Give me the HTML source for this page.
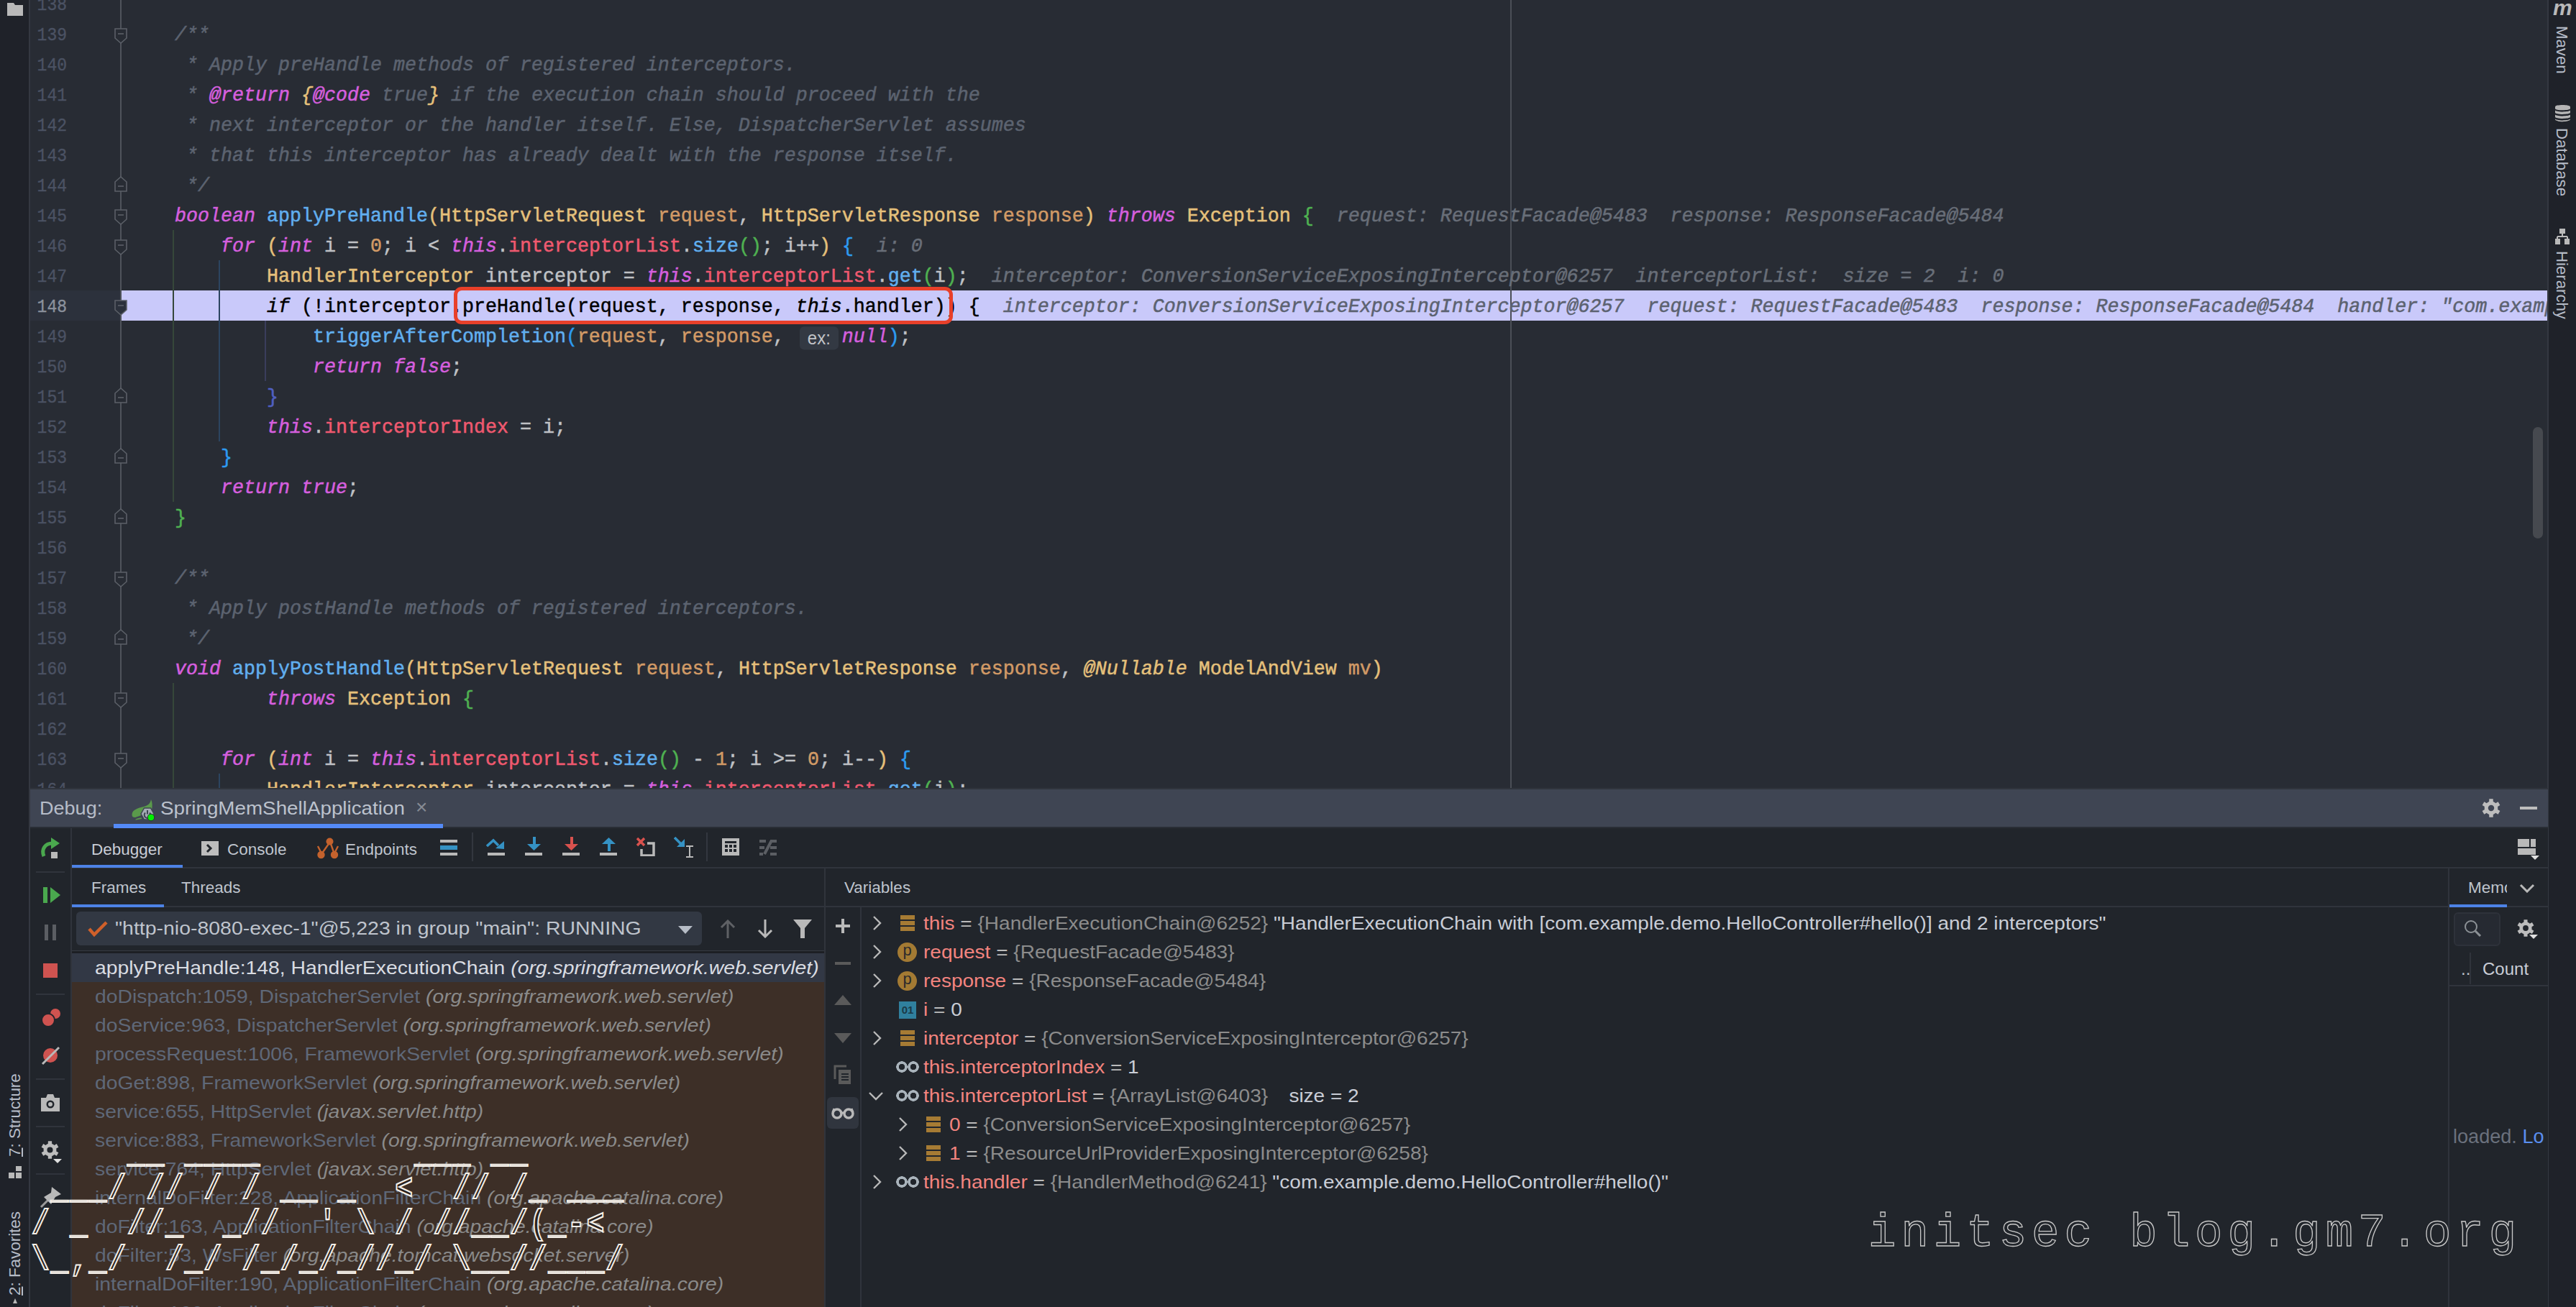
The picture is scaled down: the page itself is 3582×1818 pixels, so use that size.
<!DOCTYPE html>
<html><head><meta charset="utf-8"><style>
*{box-sizing:border-box}
html,body{margin:0;padding:0}
body{width:3582px;height:1818px;overflow:hidden;position:relative;background:#21252b;font-family:"Liberation Sans",sans-serif;color:#bbbbbb}
.a{position:absolute}
#editor{position:absolute;left:0;top:0;width:3543px;height:1096px;overflow:hidden;background:#282c34}
.curgut{position:absolute;left:42px;width:127px;height:42px;background:#2c313c}
.hl{position:absolute;left:169px;width:3380px;height:42px;background:#c9c9fa}
.foldline{position:absolute;left:167px;top:0;width:2px;height:1096px;background:#4f535b}
.gn{position:absolute;left:42px;width:51px;height:42px;line-height:42px;padding-top:3px;text-align:right;font-family:"Liberation Mono",monospace;font-size:23px;color:#4b5263;-webkit-text-stroke:0.35px currentColor;transform-origin:0 30px;transform:scaleY(1.16)}
.gn.cur{color:#8b919c}
.fm{position:absolute;left:159px}
.ig{position:absolute;width:2px}
.margin{position:absolute;left:2100px;top:0;width:2px;height:1096px;background:#4b4f57}
#code{position:absolute;left:179px;top:0;width:3400px;height:1096px}
.ln{position:absolute;left:0;height:42px;line-height:42px;padding-top:2px;white-space:pre;font-family:"Liberation Mono",monospace;font-size:26.67px;color:#bfc1c5;transform-origin:0 30px;transform:scaleY(1.04);-webkit-text-stroke:0.5px currentColor}
.c{color:#5c6370;font-style:italic}
.dt{color:#d55fde;font-style:italic}
.db{color:#e5c07b;font-style:italic}
.k{color:#d55fde;font-style:italic}
.f{color:#61afef}
.t{color:#e5c07b}
.p{color:#d19a66}
.fd{color:#ef596f}
.v{color:#bfc1c5}
.n{color:#d19a66}
.b1{color:#e5c07b}
.b2{color:#4fb151}
.b3{color:#2d9bf0}
.b4{color:#5060c0}
.an{color:#e5c07b;font-style:italic}
.h{color:#686e78;font-style:italic}
.h2{color:#5c6270;font-style:italic}
.x{color:#000}
.xk{color:#000;font-style:italic}
.ph{display:inline-block;vertical-align:top;margin:7px 5px 0 5px;width:54px;height:31px;line-height:31px;border-radius:6px;background:#333943;color:#c2c4c8;font-family:"Liberation Sans",sans-serif;font-size:24px;text-align:center;font-style:normal;-webkit-text-stroke:0}
.redbox{position:absolute;left:631px;top:399px;width:694px;height:52px;border:5.5px solid #e8402a;border-radius:11px}
.vscroll{position:absolute;left:3522px;top:594px;width:14px;height:155px;border-radius:7px;background:#46494f}
.ui{font-family:"Liberation Sans",sans-serif;white-space:nowrap}
.tab{font-size:22.5px;line-height:54px;color:#bfc4cd}
.vlab{font-family:"Liberation Sans",sans-serif;font-size:22.4px;line-height:30px;color:#b6bcc8;white-space:nowrap}
.vlabr{font-family:"Liberation Sans",sans-serif;font-size:22.2px;line-height:30px;color:#b6bcc8;white-space:nowrap;transform-origin:0 0;transform:rotate(90deg)}
.fr{height:40px;line-height:40px;font-size:26px;white-space:nowrap;color:#5f6878}
.fr i{color:#8a8a8a}
.fr.sel{color:#d9dce2}
.fr.sel i{color:#d9dce2}
.vr{position:relative;height:40px;line-height:40px;font-size:26px;white-space:nowrap;color:#bbbbbb;padding-left:86px}
.vr.ch{padding-left:122px}
.vr .arr{position:absolute;left:15px;top:0}
.vr.ch .arr{left:51px}

.vr .ico{position:absolute;top:9px}
.ico.fld{width:20px;height:22px;margin-left:2px;background:linear-gradient(#a67b34 0 28%,transparent 28% 36%,#a67b34 36% 64%,transparent 64% 72%,#a67b34 72%)}
.ico.par{width:27px;height:27px;border-radius:14px;background:#a37a33;color:#2b2b2b;font-size:22px;line-height:22px;text-align:center;top:7px}
.ico.prim{width:24px;height:24px;background:#30809e;color:#1b3a48;font-size:15px;line-height:24px;text-align:center;font-weight:bold}
.ico.gl{width:32px;height:18px;top:11px;background:radial-gradient(circle at 8px 9px,transparent 4px,#a9b3bb 4.5px,#a9b3bb 7.5px,transparent 8px),radial-gradient(circle at 24px 9px,transparent 4px,#a9b3bb 4.5px,#a9b3bb 7.5px,transparent 8px)}
.nm{color:#f3847f}
.gv{color:#8c8c8c}
.sv{color:#c9cdd6}
.wm{font-family:"Liberation Mono",monospace;font-size:64px;letter-spacing:7px;color:transparent;-webkit-text-stroke:1.3px #c8c8c8;white-space:pre;line-height:80px}

.art{margin:0;font-weight:bold;font-family:"Liberation Mono",monospace;font-size:48px;letter-spacing:2.5px;line-height:49.7px;color:#2a211d;-webkit-text-stroke:2.2px #f4efe8;white-space:pre;transform-origin:0 0;transform:scaleX(0.85)}

.fr .sx{display:inline-block;transform-origin:0 50%;transform:scaleX(1.09)}
.vr .sx{display:inline-block;transform-origin:0 50%;transform:scaleX(1.077)}

</style></head><body>

<div id="editor">
  <div class="curgut" style="top:404px"></div>
  <div class="hl" style="top:404px"></div>
  <div class="foldline"></div>
  <div class="gn" style="top:-16px">138</div><div class="gn" style="top:26px">139</div><div class="gn" style="top:68px">140</div><div class="gn" style="top:110px">141</div><div class="gn" style="top:152px">142</div><div class="gn" style="top:194px">143</div><div class="gn" style="top:236px">144</div><div class="gn" style="top:278px">145</div><div class="gn" style="top:320px">146</div><div class="gn" style="top:362px">147</div><div class="gn cur" style="top:404px">148</div><div class="gn" style="top:446px">149</div><div class="gn" style="top:488px">150</div><div class="gn" style="top:530px">151</div><div class="gn" style="top:572px">152</div><div class="gn" style="top:614px">153</div><div class="gn" style="top:656px">154</div><div class="gn" style="top:698px">155</div><div class="gn" style="top:740px">156</div><div class="gn" style="top:782px">157</div><div class="gn" style="top:824px">158</div><div class="gn" style="top:866px">159</div><div class="gn" style="top:908px">160</div><div class="gn" style="top:950px">161</div><div class="gn" style="top:992px">162</div><div class="gn" style="top:1034px">163</div><div class="gn" style="top:1076px">164</div>
  <svg class="fm" style="top:39px" width="18" height="22" viewBox="0 0 18 22"><path d="M1 1 H17 V14 L9 21 L1 14 Z" fill="#282c34" stroke="#5c6068" stroke-width="1.6"/><path d="M5 8 H13" stroke="#5c6068" stroke-width="1.6"/></svg><svg class="fm" style="top:245px" width="18" height="22" viewBox="0 0 18 22"><path d="M1 21 H17 V8 L9 1 L1 8 Z" fill="#282c34" stroke="#5c6068" stroke-width="1.6"/><path d="M5 14 H13" stroke="#5c6068" stroke-width="1.6"/></svg><svg class="fm" style="top:291px" width="18" height="22" viewBox="0 0 18 22"><path d="M1 1 H17 V14 L9 21 L1 14 Z" fill="#282c34" stroke="#5c6068" stroke-width="1.6"/><path d="M5 8 H13" stroke="#5c6068" stroke-width="1.6"/></svg><svg class="fm" style="top:333px" width="18" height="22" viewBox="0 0 18 22"><path d="M1 1 H17 V14 L9 21 L1 14 Z" fill="#282c34" stroke="#5c6068" stroke-width="1.6"/><path d="M5 8 H13" stroke="#5c6068" stroke-width="1.6"/></svg><svg class="fm" style="top:417px" width="18" height="22" viewBox="0 0 18 22"><path d="M1 1 H17 V14 L9 21 L1 14 Z" fill="#2c313c" stroke="#5c6068" stroke-width="1.6"/><path d="M5 8 H13" stroke="#5c6068" stroke-width="1.6"/></svg><svg class="fm" style="top:539px" width="18" height="22" viewBox="0 0 18 22"><path d="M1 21 H17 V8 L9 1 L1 8 Z" fill="#282c34" stroke="#5c6068" stroke-width="1.6"/><path d="M5 14 H13" stroke="#5c6068" stroke-width="1.6"/></svg><svg class="fm" style="top:623px" width="18" height="22" viewBox="0 0 18 22"><path d="M1 21 H17 V8 L9 1 L1 8 Z" fill="#282c34" stroke="#5c6068" stroke-width="1.6"/><path d="M5 14 H13" stroke="#5c6068" stroke-width="1.6"/></svg><svg class="fm" style="top:707px" width="18" height="22" viewBox="0 0 18 22"><path d="M1 21 H17 V8 L9 1 L1 8 Z" fill="#282c34" stroke="#5c6068" stroke-width="1.6"/><path d="M5 14 H13" stroke="#5c6068" stroke-width="1.6"/></svg><svg class="fm" style="top:795px" width="18" height="22" viewBox="0 0 18 22"><path d="M1 1 H17 V14 L9 21 L1 14 Z" fill="#282c34" stroke="#5c6068" stroke-width="1.6"/><path d="M5 8 H13" stroke="#5c6068" stroke-width="1.6"/></svg><svg class="fm" style="top:875px" width="18" height="22" viewBox="0 0 18 22"><path d="M1 21 H17 V8 L9 1 L1 8 Z" fill="#282c34" stroke="#5c6068" stroke-width="1.6"/><path d="M5 14 H13" stroke="#5c6068" stroke-width="1.6"/></svg><svg class="fm" style="top:963px" width="18" height="22" viewBox="0 0 18 22"><path d="M1 1 H17 V14 L9 21 L1 14 Z" fill="#282c34" stroke="#5c6068" stroke-width="1.6"/><path d="M5 8 H13" stroke="#5c6068" stroke-width="1.6"/></svg><svg class="fm" style="top:1047px" width="18" height="22" viewBox="0 0 18 22"><path d="M1 1 H17 V14 L9 21 L1 14 Z" fill="#282c34" stroke="#5c6068" stroke-width="1.6"/><path d="M5 8 H13" stroke="#5c6068" stroke-width="1.6"/></svg>
  <div class="ig" style="left:240px;top:320px;height:378px;background:#36473a"></div>
  <div class="ig" style="left:240px;top:950px;height:146px;background:#36473a"></div>
  <div class="ig" style="left:304px;top:362px;height:252px;background:#2c4560"></div>
  <div class="ig" style="left:304px;top:1076px;height:20px;background:#2c4560"></div>
  <div class="ig" style="left:368px;top:446px;height:84px;background:#3a3d5c"></div>
  <div class="margin"></div>
  <div id="code"><div class="ln" style="top:-16px"></div><div class="ln" style="top:26px"><span class="c">    /**</span></div><div class="ln" style="top:68px"><span class="c">     * Apply preHandle methods of registered interceptors.</span></div><div class="ln" style="top:110px"><span class="c">     * </span><span class="dt">@return</span><span class="c"> </span><span class="db">{</span><span class="dt">@code</span><span class="c"> true</span><span class="db">}</span><span class="c"> if the execution chain should proceed with the</span></div><div class="ln" style="top:152px"><span class="c">     * next interceptor or the handler itself. Else, DispatcherServlet assumes</span></div><div class="ln" style="top:194px"><span class="c">     * that this interceptor has already dealt with the response itself.</span></div><div class="ln" style="top:236px"><span class="c">     */</span></div><div class="ln" style="top:278px"><span class="v">    </span><span class="k">boolean</span><span class="v"> </span><span class="f">applyPreHandle</span><span class="b1">(</span><span class="t">HttpServletRequest</span><span class="v"> </span><span class="p">request</span><span class="v">, </span><span class="t">HttpServletResponse</span><span class="v"> </span><span class="p">response</span><span class="b1">)</span><span class="v"> </span><span class="k">throws</span><span class="v"> </span><span class="t">Exception</span><span class="v"> </span><span class="b2">{</span><span class="h">  request: RequestFacade@5483  response: ResponseFacade@5484</span></div><div class="ln" style="top:320px"><span class="v">        </span><span class="k">for</span><span class="v"> </span><span class="b1">(</span><span class="k">int</span><span class="v"> i = </span><span class="n">0</span><span class="v">; i &lt; </span><span class="k">this</span><span class="v">.</span><span class="fd">interceptorList</span><span class="v">.</span><span class="f">size</span><span class="b2">()</span><span class="v">; i++</span><span class="b1">)</span><span class="v"> </span><span class="b3">{</span><span class="h">  i: 0</span></div><div class="ln" style="top:362px"><span class="v">            </span><span class="t">HandlerInterceptor</span><span class="v"> interceptor = </span><span class="k">this</span><span class="v">.</span><span class="fd">interceptorList</span><span class="v">.</span><span class="f">get</span><span class="b2">(</span><span class="v">i</span><span class="b2">)</span><span class="v">;</span><span class="h">  interceptor: ConversionServiceExposingInterceptor@6257  interceptorList:  size = 2  i: 0</span></div><div class="ln" style="top:404px"><span class="x">            </span><span class="xk">if</span><span class="x"> (!interceptor.preHandle(request, response, </span><span class="xk">this</span><span class="x">.handler)) {</span><span class="h2">  interceptor: ConversionServiceExposingInterceptor@6257  request: RequestFacade@5483  response: ResponseFacade@5484  handler: &quot;com.example.demo.HelloController#hello()&quot;</span></div><div class="ln" style="top:446px"><span class="v">                </span><span class="f">triggerAfterCompletion</span><span class="b3">(</span><span class="p">request</span><span class="v">, </span><span class="p">response</span><span class="v">, </span><span class="ph">ex:</span><span class="k">null</span><span class="b3">)</span><span class="v">;</span></div><div class="ln" style="top:488px"><span class="v">                </span><span class="k">return</span><span class="v"> </span><span class="k">false</span><span class="v">;</span></div><div class="ln" style="top:530px"><span class="v">            </span><span class="b4">}</span></div><div class="ln" style="top:572px"><span class="v">            </span><span class="k">this</span><span class="v">.</span><span class="fd">interceptorIndex</span><span class="v"> = i;</span></div><div class="ln" style="top:614px"><span class="v">        </span><span class="b3">}</span></div><div class="ln" style="top:656px"><span class="v">        </span><span class="k">return</span><span class="v"> </span><span class="k">true</span><span class="v">;</span></div><div class="ln" style="top:698px"><span class="v">    </span><span class="b2">}</span></div><div class="ln" style="top:740px"></div><div class="ln" style="top:782px"><span class="c">    /**</span></div><div class="ln" style="top:824px"><span class="c">     * Apply postHandle methods of registered interceptors.</span></div><div class="ln" style="top:866px"><span class="c">     */</span></div><div class="ln" style="top:908px"><span class="v">    </span><span class="k">void</span><span class="v"> </span><span class="f">applyPostHandle</span><span class="b1">(</span><span class="t">HttpServletRequest</span><span class="v"> </span><span class="p">request</span><span class="v">, </span><span class="t">HttpServletResponse</span><span class="v"> </span><span class="p">response</span><span class="v">, </span><span class="an">@Nullable</span><span class="v"> </span><span class="t">ModelAndView</span><span class="v"> </span><span class="p">mv</span><span class="b1">)</span></div><div class="ln" style="top:950px"><span class="v">            </span><span class="k">throws</span><span class="v"> </span><span class="t">Exception</span><span class="v"> </span><span class="b2">{</span></div><div class="ln" style="top:992px"></div><div class="ln" style="top:1034px"><span class="v">        </span><span class="k">for</span><span class="v"> </span><span class="b1">(</span><span class="k">int</span><span class="v"> i = </span><span class="k">this</span><span class="v">.</span><span class="fd">interceptorList</span><span class="v">.</span><span class="f">size</span><span class="b2">()</span><span class="v"> - </span><span class="n">1</span><span class="v">; i &gt;= </span><span class="n">0</span><span class="v">; i--</span><span class="b1">)</span><span class="v"> </span><span class="b3">{</span></div><div class="ln" style="top:1076px"><span class="v">            </span><span class="t">HandlerInterceptor</span><span class="v"> interceptor = </span><span class="k">this</span><span class="v">.</span><span class="fd">interceptorList</span><span class="v">.</span><span class="f">get</span><span class="b2">(</span><span class="v">i</span><span class="b2">)</span><span class="v">;</span></div></div>
  <div class="redbox"></div>
  <div class="vscroll"></div>
</div>

<!-- left stripe -->
<div class="a" style="left:0;top:0;width:41px;height:1818px;background:#1f2229"></div>
<div class="a" style="left:40px;top:0;width:2px;height:1818px;background:#343841"></div>
<svg class="a" style="left:9px;top:3px" width="24" height="20" viewBox="0 0 24 20"><path d="M1 1 H10 L12 4 H23 V19 H1 Z" fill="#b9b9b9"/></svg>
<div class="a vlab" style="left:6px;top:1492px;width:117px;height:30px;transform-origin:0 0;transform:translate(0,117px) rotate(-90deg)"><u>7</u>: Structure</div>
<svg class="a" style="left:12px;top:1622px" width="18" height="18" viewBox="0 0 18 18"><rect x="0" y="9" width="8" height="8" fill="#b9b9b9"/><rect x="10" y="9" width="8" height="8" fill="#b9b9b9"/><rect x="10" y="0" width="8" height="7" fill="#b9b9b9"/></svg>
<div class="a vlab" style="left:6px;top:1685px;width:117px;height:30px;transform-origin:0 0;transform:translate(0,117px) rotate(-90deg)"><u>2</u>: Favorites</div>
<svg class="a" style="left:12px;top:1806px" width="18" height="14" viewBox="0 0 18 14"><path d="M9 0 L12 7 H6 Z" fill="#b9b9b9"/></svg>

<!-- right stripe -->
<div class="a" style="left:3544px;top:0;width:38px;height:1818px;background:#1f2229"></div>
<div class="a" style="left:3542px;top:0;width:2px;height:1818px;background:#343841"></div>
<div class="a" style="left:3550px;top:-6px;font:italic bold 30px 'Liberation Sans',sans-serif;color:#b9b9b9">m</div>
<div class="a vlabr" style="left:3577px;top:36px;width:66px">Maven</div>
<svg class="a" style="left:3552px;top:144px" width="23" height="26" viewBox="0 0 23 26"><path d="M1 4.5 C1 1 22 1 22 4.5 V7 C22 10 1 10 1 7 Z" fill="#b4b4b4"/><path d="M1 9.5 C4 12 19 12 22 9.5 V13 C19 15.5 4 15.5 1 13 Z" fill="#b4b4b4"/><path d="M1 15.5 C4 18 19 18 22 15.5 V19 C19 21.5 4 21.5 1 19 Z" fill="#b4b4b4"/><path d="M1 21.5 C4 24 19 24 22 21.5 V22.5 C19 26 4 26 1 22.5 Z" fill="#b4b4b4"/></svg>
<div class="a vlabr" style="left:3577px;top:178px;width:92px">Database</div>
<svg class="a" style="left:3553px;top:318px" width="20" height="22" viewBox="0 0 20 22"><rect x="6" y="0" width="8" height="7" fill="#b9b9b9"/><path d="M10 7 V11 M3 11 H17 M3 11 V14 M17 11 V14" stroke="#b9b9b9" stroke-width="2" fill="none"/><rect x="0" y="14" width="7" height="8" fill="#b9b9b9"/><rect x="13" y="14" width="7" height="8" fill="#b9b9b9"/></svg>
<div class="a vlabr" style="left:3577px;top:349px;width:97px">Hierarchy</div>

<!-- debug panel -->
<div class="a" style="left:42px;top:1096px;width:3501px;height:722px;background:#21252b"></div>
<div class="a" style="left:42px;top:1096px;width:3501px;height:2px;background:#30343c"></div>
<div class="a" style="left:42px;top:1098px;width:3501px;height:52px;background:#3f4553"></div>
<div class="a" style="left:42px;top:1150px;width:3501px;height:2px;background:#2a2e36"></div>
<div class="a ui" style="left:55px;top:1098px;line-height:52px;font-size:26px;color:#b6bcc8;transform-origin:0 0;transform:scaleX(1.04)">Debug:</div>
<svg class="a" style="left:180px;top:1108px" width="36" height="36" viewBox="0 0 36 36">
 <path d="M30 4 C29 9 27 12 20 14 C12 16 4 18 3.5 25 C3.5 28 5 29 8 29 L14 27 L31 19 C32 13 32 8 30 4 Z" fill="#5a9a4b"/>
 <path d="M8 32 C11 30 14 29.5 17 29.5 L17 31 L9 32.5 Z" fill="#5a9a4b"/>
 <path d="M16 24 L20.5 16 L29.5 16 L34 24 L29.5 32 L20.5 32 Z" fill="#a3abb3" stroke="#3f4553" stroke-width="1.5"/>
 <path d="M22 22.5 A4.3 4.3 0 1 0 28 22.5" stroke="#3f4553" stroke-width="2" fill="none"/>
 <path d="M25 19 V24.5" stroke="#3f4553" stroke-width="2"/>
 <circle cx="30" cy="29" r="4.8" fill="#00f000" stroke="#2a2e36" stroke-width="1"/>
</svg>
<div class="a ui" style="left:223px;top:1098px;line-height:52px;font-size:26px;color:#bcc2cd;transform-origin:0 0;transform:scaleX(1.069)">SpringMemShellApplication</div>
<div class="a ui" style="left:578px;top:1098px;line-height:50px;font-size:28px;color:#868b94">×</div>
<div class="a" style="left:158px;top:1146px;width:458px;height:6px;background:#548af7"></div>
<!-- header gear & minimize -->
<svg class="a" style="left:3451px;top:1111px" width="26" height="26" viewBox="0 0 24 24"><path fill="#bdbdbd" fill-rule="evenodd" d="M8.08 4.35 L9.41 3.80 L9.49 0.27 L14.51 0.27 L14.59 3.80 L16.67 4.78 L17.81 5.66 L20.91 3.96 L23.42 8.31 L20.40 10.14 L20.59 12.43 L20.40 13.86 L23.42 15.69 L20.91 20.04 L17.81 18.34 L15.92 19.65 L14.59 20.20 L14.51 23.73 L9.49 23.73 L9.41 20.20 L7.33 19.22 L6.19 18.34 L3.09 20.04 L0.58 15.69 L3.60 13.86 L3.41 11.57 L3.60 10.14 L0.58 8.31 L3.09 3.96 L6.19 5.66 Z M8.10 12.00 a3.90 3.90 0 1 0 7.80 0 a3.90 3.90 0 1 0 -7.80 0 Z"/></svg>
<div class="a" style="left:3504px;top:1122px;width:24px;height:4px;background:#bdbdbd"></div>

<!-- row 2 -->
<div class="a" style="left:98px;top:1152px;width:2px;height:666px;background:#30343c"></div>
<div class="a" style="left:100px;top:1206px;width:3443px;height:2px;background:#30343c"></div>
<svg class="a" style="left:55px;top:1163px" width="32" height="34" viewBox="0 0 32 34"><path d="M6 28 C2 18 8 10 18 10" stroke="#4aa84e" stroke-width="5" fill="none"/><path d="M16 2 L28 10 L16 18 Z" fill="#4aa84e"/><rect x="16" y="22" width="9" height="9" fill="#b9b9b9"/></svg>
<div class="a" style="left:50px;top:1212px;width:40px;height:2px;background:#30343c"></div>
<div class="a ui tab" style="left:127px;top:1155px;color:#c9cdd6">Debugger</div>
<div class="a" style="left:100px;top:1203px;width:154px;height:4px;background:#4d82e6"></div>
<svg class="a" style="left:280px;top:1170px" width="25" height="21" viewBox="0 0 25 21"><rect x="0" y="0" width="24" height="20" fill="#bdbdbd"/><path d="M8 5 L13 10 L8 15" stroke="#21252b" stroke-width="3" fill="none"/></svg>
<div class="a ui tab" style="left:316px;top:1155px">Console</div>
<svg class="a" style="left:438px;top:1164px" width="34" height="32" viewBox="0 0 34 32"><path d="M21 7 L9 24 M21 7 L27 24 M8 21 L4 13 M28 21 L32 13" stroke="#c4622d" stroke-width="2.4" fill="none"/><circle cx="20.5" cy="6.5" r="5" fill="#c4622d"/><circle cx="8.5" cy="25" r="5.2" fill="#c4622d"/><circle cx="27" cy="25" r="5.2" fill="#c4622d"/></svg>
<div class="a ui tab" style="left:480px;top:1155px">Endpoints</div>
<!-- toolbar icons -->
<svg class="a" style="left:612px;top:1167px" width="25" height="24" viewBox="0 0 25 24"><rect x="0" y="1" width="24" height="4" fill="#b9b9b9"/><rect x="0" y="9" width="24" height="6" fill="#3592c4"/><rect x="0" y="19" width="24" height="4" fill="#b9b9b9"/></svg>
<div class="a" style="left:656px;top:1158px;width:2px;height:40px;background:#33373f"></div>
<svg class="a" style="left:676px;top:1165px" width="27" height="26" viewBox="0 0 27 26"><path d="M1 12 L10 4 L17 11" stroke="#3592c4" stroke-width="3.5" fill="none"/><path d="M13 15 L25 5 V16 Z" fill="#3592c4"/><rect x="2" y="21" width="24" height="4" fill="#b9b9b9"/></svg>
<svg class="a" style="left:730px;top:1164px" width="25" height="27" viewBox="0 0 25 27"><rect x="11" y="0" width="4" height="12" fill="#3592c4"/><path d="M3 10 H22 L12.5 19 Z" fill="#3592c4"/><rect x="0" y="22" width="24" height="4" fill="#b9b9b9"/></svg>
<svg class="a" style="left:782px;top:1164px" width="25" height="27" viewBox="0 0 25 27"><rect x="11" y="0" width="4" height="12" fill="#d9524e"/><path d="M3 10 H22 L12.5 19 Z" fill="#d9524e"/><rect x="0" y="22" width="24" height="4" fill="#b9b9b9"/></svg>
<svg class="a" style="left:834px;top:1164px" width="25" height="27" viewBox="0 0 25 27"><path d="M3 10 H22 L12.5 1 Z" fill="#3592c4"/><rect x="11" y="9" width="4" height="11" fill="#3592c4"/><rect x="0" y="22" width="24" height="4" fill="#b9b9b9"/></svg>
<svg class="a" style="left:884px;top:1164px" width="27" height="27" viewBox="0 0 27 27"><path d="M2 2 L12 12 M12 2 L2 12" stroke="#d9524e" stroke-width="3.5"/><path d="M16 9 H25 V26 H8 V17" stroke="#b9b9b9" stroke-width="3.5" fill="none"/></svg>
<svg class="a" style="left:937px;top:1164px" width="28" height="29" viewBox="0 0 28 29"><path d="M1 1 L10 10" stroke="#3592c4" stroke-width="3.5"/><path d="M4 14 H15 V3 Z" fill="#3592c4"/><path d="M17 13 H27 M22 13 V28 M17 28 H27" stroke="#b9b9b9" stroke-width="2" fill="none"/></svg>
<div class="a" style="left:982px;top:1158px;width:2px;height:40px;background:#33373f"></div>
<svg class="a" style="left:1004px;top:1166px" width="25" height="25" viewBox="0 0 25 25"><rect x="0" y="0" width="24" height="24" fill="#b9b9b9"/><rect x="4" y="4" width="16" height="3" fill="#21252b"/><rect x="4" y="9" width="4" height="4" fill="#21252b"/><rect x="10" y="9" width="4" height="4" fill="#21252b"/><rect x="16" y="9" width="4" height="4" fill="#21252b"/><rect x="4" y="15" width="4" height="4" fill="#21252b"/><rect x="10" y="15" width="4" height="4" fill="#21252b"/><rect x="16" y="15" width="4" height="4" fill="#21252b"/></svg>
<svg class="a" style="left:1056px;top:1168px" width="25" height="22" viewBox="0 0 25 22"><path d="M0 2 H9 M15 2 H24 M0 11 H7 M15 11 H24 M0 20 H5 M15 20 H24 M7 20 L17 1" stroke="#5b5e63" stroke-width="4" fill="none"/></svg>
<svg class="a" style="left:3501px;top:1167px" width="32" height="30" viewBox="0 0 32 30"><rect x="0" y="0" width="16" height="11" fill="#b9b9b9"/><rect x="18" y="0" width="7" height="11" fill="#b9b9b9"/><rect x="0" y="13" width="25" height="9" fill="#b9b9b9"/><path d="M18 23 H30 L24 29 Z" fill="#e0e0e0"/></svg>

<!-- debug action column icons -->
<svg class="a" style="left:60px;top:1234px" width="25" height="23" viewBox="0 0 25 23"><rect x="0" y="0" width="6" height="22" fill="#4aa84e"/><path d="M10 0 L24 11 L10 22 Z" fill="#4aa84e"/></svg>
<svg class="a" style="left:62px;top:1286px" width="17" height="23" viewBox="0 0 17 23"><rect x="0" y="0" width="5" height="22" fill="#5b5e63"/><rect x="11" y="0" width="5" height="22" fill="#5b5e63"/></svg>
<div class="a" style="left:60px;top:1340px;width:20px;height:20px;background:#cf5350"></div>
<div class="a" style="left:50px;top:1382px;width:40px;height:2px;background:#30343c"></div>
<svg class="a" style="left:57px;top:1401px" width="28" height="28" viewBox="0 0 28 28"><circle cx="20" cy="9" r="7" fill="#cf5350"/><circle cx="10" cy="18" r="9" fill="#cf5350" stroke="#21252b" stroke-width="2"/></svg>
<svg class="a" style="left:57px;top:1455px" width="27" height="27" viewBox="0 0 27 27"><circle cx="13" cy="13" r="10" fill="#cf5350"/><path d="M2 25 L25 2" stroke="#b9b9b9" stroke-width="3"/></svg>
<div class="a" style="left:50px;top:1500px;width:40px;height:2px;background:#30343c"></div>
<svg class="a" style="left:57px;top:1521px" width="26" height="26" viewBox="0 0 26 26"><path d="M0 6 H7 L9 1 H17 L19 6 H26 V25 H0 Z" fill="#b9b9b9"/><circle cx="13" cy="15" r="5.5" fill="#21252b"/><circle cx="13" cy="15" r="3" fill="#b9b9b9"/></svg>
<div class="a" style="left:50px;top:1566px;width:40px;height:2px;background:#30343c"></div>
<svg class="a" style="left:57px;top:1587px" width="30" height="32" viewBox="0 0 30 32"><g transform="translate(0,0) scale(1.04)"><path fill="#bdbdbd" fill-rule="evenodd" d="M8.08 4.35 L9.41 3.80 L9.49 0.27 L14.51 0.27 L14.59 3.80 L16.67 4.78 L17.81 5.66 L20.91 3.96 L23.42 8.31 L20.40 10.14 L20.59 12.43 L20.40 13.86 L23.42 15.69 L20.91 20.04 L17.81 18.34 L15.92 19.65 L14.59 20.20 L14.51 23.73 L9.49 23.73 L9.41 20.20 L7.33 19.22 L6.19 18.34 L3.09 20.04 L0.58 15.69 L3.60 13.86 L3.41 11.57 L3.60 10.14 L0.58 8.31 L3.09 3.96 L6.19 5.66 Z M8.10 12.00 a3.90 3.90 0 1 0 7.80 0 a3.90 3.90 0 1 0 -7.80 0 Z"/></g><path d="M17 25 H29 L23 31 Z" fill="#e0e0e0"/></svg>
<div class="a" style="left:50px;top:1632px;width:40px;height:2px;background:#30343c"></div>
<svg class="a" style="left:55px;top:1651px" width="30" height="30" viewBox="0 0 30 30"><path d="M2 28 L13 17" stroke="#9a9a9a" stroke-width="3"/><path d="M17 0 L30 10 L22 14 L16 24 L6 14 L16 8 Z" fill="#b9b9b9"/></svg>

<!-- frames panel -->
<div class="a ui tab" style="left:127px;top:1208px;line-height:53px">Frames</div>
<div class="a ui tab" style="left:252px;top:1208px;line-height:53px">Threads</div>
<div class="a" style="left:100px;top:1258px;width:128px;height:4px;background:#4d82e6"></div>
<div class="a" style="left:228px;top:1260px;width:3315px;height:2px;background:#30343c"></div>
<div class="a" style="left:1146px;top:1208px;width:2px;height:610px;background:#30343c"></div>
<div class="a" style="left:106px;top:1268px;width:870px;height:47px;border-radius:6px;background:#323843"></div>
<svg class="a" style="left:121px;top:1280px" width="30" height="24" viewBox="0 0 30 24"><path d="M3 12 L10 20 L27 3" stroke="#d0602a" stroke-width="4.5" fill="none"/></svg>
<div class="a ui" id="thr" style="left:160px;top:1268px;line-height:47px;font-size:26px;color:#bfc4cd;transform-origin:0 0;transform:scaleX(1.094)">"http-nio-8080-exec-1"@5,223 in group "main": RUNNING</div>
<svg class="a" style="left:943px;top:1288px" width="20" height="12" viewBox="0 0 20 12"><path d="M0 0 H20 L10 11 Z" fill="#b6bcc6"/></svg>
<svg class="a" style="left:1001px;top:1279px" width="22" height="26" viewBox="0 0 22 26"><path d="M11 2 V26 M2 11 L11 2 L20 11" stroke="#5f6165" stroke-width="3" fill="none"/></svg>
<svg class="a" style="left:1053px;top:1279px" width="22" height="26" viewBox="0 0 22 26"><path d="M11 0 V24 M2 15 L11 24 L20 15" stroke="#b9b9b9" stroke-width="3" fill="none"/></svg>
<svg class="a" style="left:1103px;top:1279px" width="26" height="26" viewBox="0 0 26 26"><path d="M0 0 H26 L16 12 V26 H10 V12 Z" fill="#b9b9b9"/></svg>
<div class="a" style="left:100px;top:1322px;width:1046px;height:1px;background:#363a42"></div><div class="a" style="left:100px;top:1323px;width:1046px;height:3px;background:#1c1f24"></div>
<div class="a" style="left:100px;top:1326px;width:1046px;height:40px;background:#323845"></div>
<div class="a" style="left:100px;top:1366px;width:1046px;height:452px;background:#3d2f27"></div>
<div id="frames" class="a" style="left:132px;top:1326px">
<div class="fr sel"><span class="sx">applyPreHandle:148, HandlerExecutionChain <i>(org.springframework.web.servlet)</i></span></div>
<div class="fr"><span class="sx">doDispatch:1059, DispatcherServlet <i>(org.springframework.web.servlet)</i></span></div>
<div class="fr"><span class="sx">doService:963, DispatcherServlet <i>(org.springframework.web.servlet)</i></span></div>
<div class="fr"><span class="sx">processRequest:1006, FrameworkServlet <i>(org.springframework.web.servlet)</i></span></div>
<div class="fr"><span class="sx">doGet:898, FrameworkServlet <i>(org.springframework.web.servlet)</i></span></div>
<div class="fr"><span class="sx">service:655, HttpServlet <i>(javax.servlet.http)</i></span></div>
<div class="fr"><span class="sx">service:883, FrameworkServlet <i>(org.springframework.web.servlet)</i></span></div>
<div class="fr"><span class="sx">service:764, HttpServlet <i>(javax.servlet.http)</i></span></div>
<div class="fr"><span class="sx">internalDoFilter:228, ApplicationFilterChain <i>(org.apache.catalina.core)</i></span></div>
<div class="fr"><span class="sx">doFilter:163, ApplicationFilterChain <i>(org.apache.catalina.core)</i></span></div>
<div class="fr"><span class="sx">doFilter:53, WsFilter <i>(org.apache.tomcat.websocket.server)</i></span></div>
<div class="fr"><span class="sx">internalDoFilter:190, ApplicationFilterChain <i>(org.apache.catalina.core)</i></span></div>
<div class="fr"><span class="sx">doFilter:166, ApplicationFilterChain <i>(org.apache.catalina.core)</i></span></div>
</div>

<!-- variables toolbar column -->
<div class="a" style="left:1196px;top:1262px;width:2px;height:556px;background:#30343c"></div>
<svg class="a" style="left:1161px;top:1277px" width="22" height="22" viewBox="0 0 22 22"><path d="M11 1 V21 M1 11 H21" stroke="#b9b9b9" stroke-width="4"/></svg>
<div class="a" style="left:1161px;top:1338px;width:22px;height:4px;background:#5a5a5a"></div>
<svg class="a" style="left:1160px;top:1384px" width="24" height="14" viewBox="0 0 24 14"><path d="M0 14 L12 0 L24 14 Z" fill="#5a5a5a"/></svg>
<svg class="a" style="left:1160px;top:1437px" width="24" height="14" viewBox="0 0 24 14"><path d="M0 0 L12 14 L24 0 Z" fill="#5a5a5a"/></svg>
<svg class="a" style="left:1159px;top:1481px" width="26" height="28" viewBox="0 0 26 28"><path d="M2 20 V2 H18" stroke="#5a5a5a" stroke-width="3" fill="none"/><rect x="7" y="7" width="17" height="20" fill="#5a5a5a"/><path d="M11 13 H21 M11 17 H21 M11 21 H21" stroke="#21252b" stroke-width="2"/></svg>
<div class="a" style="left:1150px;top:1526px;width:44px;height:44px;border-radius:6px;background:#30353e"></div>
<svg class="a" style="left:1156px;top:1539px" width="32" height="18" viewBox="0 0 32 18"><circle cx="8" cy="10" r="6" stroke="#b9b9b9" stroke-width="3.5" fill="none"/><circle cx="24" cy="10" r="6" stroke="#b9b9b9" stroke-width="3.5" fill="none"/><path d="M14 9 H18 M2 8 L4 3 M30 8 L28 3" stroke="#b9b9b9" stroke-width="3"/></svg>

<!-- variables header -->
<div class="a ui tab" style="left:1174px;top:1208px;line-height:53px">Variables</div>

<!-- variables tree -->
<div id="vars" class="a" style="left:1198px;top:1264px">
<div class="vr"><svg class="arr" width="14" height="40" viewBox="0 0 14 40"><path d="M2 11 L11 20 L2 29" stroke="#b9b9b9" stroke-width="2.4" fill="none"/></svg><span class="ico fld" style="left:52px"></span><span class="sx"><span class="nm">this</span> = <span class="gv">{HandlerExecutionChain@6252}</span> <span class="sv">"HandlerExecutionChain with [com.example.demo.HelloController#hello()] and 2 interceptors"</span></span></div>
<div class="vr"><svg class="arr" width="14" height="40" viewBox="0 0 14 40"><path d="M2 11 L11 20 L2 29" stroke="#b9b9b9" stroke-width="2.4" fill="none"/></svg><span class="ico par" style="left:50px">p</span><span class="sx"><span class="nm">request</span> = <span class="gv">{RequestFacade@5483}</span></span></div>
<div class="vr"><svg class="arr" width="14" height="40" viewBox="0 0 14 40"><path d="M2 11 L11 20 L2 29" stroke="#b9b9b9" stroke-width="2.4" fill="none"/></svg><span class="ico par" style="left:50px">p</span><span class="sx"><span class="nm">response</span> = <span class="gv">{ResponseFacade@5484}</span></span></div>
<div class="vr"><span class="ico prim" style="left:52px">01</span><span class="sx"><span class="nm">i</span> = <span class="sv">0</span></span></div>
<div class="vr"><svg class="arr" width="14" height="40" viewBox="0 0 14 40"><path d="M2 11 L11 20 L2 29" stroke="#b9b9b9" stroke-width="2.4" fill="none"/></svg><span class="ico fld" style="left:52px"></span><span class="sx"><span class="nm">interceptor</span> = <span class="gv">{ConversionServiceExposingInterceptor@6257}</span></span></div>
<div class="vr"><span class="ico gl" style="left:48px"></span><span class="sx"><span class="nm">this.interceptorIndex</span> = <span class="sv">1</span></span></div>
<div class="vr"><svg class="arr" width="20" height="40" viewBox="0 0 20 40" style="left:10px"><path d="M1 16 L10 25 L19 16" stroke="#b9b9b9" stroke-width="2.4" fill="none"/></svg><span class="ico gl" style="left:48px"></span><span class="sx"><span class="nm">this.interceptorList</span> = <span class="gv">{ArrayList@6403}</span> <span class="sv" style="margin-left:20px">size = 2</span></span></div>
<div class="vr ch"><svg class="arr" width="14" height="40" viewBox="0 0 14 40"><path d="M2 11 L11 20 L2 29" stroke="#b9b9b9" stroke-width="2.4" fill="none"/></svg><span class="ico fld" style="left:88px"></span><span class="sx"><span class="nm">0</span> = <span class="gv">{ConversionServiceExposingInterceptor@6257}</span></span></div>
<div class="vr ch"><svg class="arr" width="14" height="40" viewBox="0 0 14 40"><path d="M2 11 L11 20 L2 29" stroke="#b9b9b9" stroke-width="2.4" fill="none"/></svg><span class="ico fld" style="left:88px"></span><span class="sx"><span class="nm">1</span> = <span class="gv">{ResourceUrlProviderExposingInterceptor@6258}</span></span></div>
<div class="vr"><svg class="arr" width="14" height="40" viewBox="0 0 14 40"><path d="M2 11 L11 20 L2 29" stroke="#b9b9b9" stroke-width="2.4" fill="none"/></svg><span class="ico gl" style="left:48px"></span><span class="sx"><span class="nm">this.handler</span> = <span class="gv">{HandlerMethod@6241}</span> <span class="sv">"com.example.demo.HelloController#hello()"</span></span></div>
</div>

<!-- memory panel -->
<div class="a" style="left:3404px;top:1208px;width:2px;height:610px;background:#30343c"></div>
<div class="a" style="left:3406px;top:1208px;width:137px;height:53px;overflow:hidden">
 <div class="a ui tab" style="left:26px;top:0;line-height:53px;width:54px;overflow:hidden;white-space:nowrap">Memory</div>
 <svg class="a" style="left:97px;top:21px" width="22" height="13" viewBox="0 0 22 13"><path d="M2 2 L11 11 L20 2" stroke="#b9b9b9" stroke-width="3" fill="none"/></svg>
</div>
<div class="a" style="left:3406px;top:1258px;width:80px;height:4px;background:#4d82e6"></div>
<div class="a" style="left:3412px;top:1269px;width:65px;height:47px;border-radius:6px;background:#262a32;border:2px solid #2e323a"></div>
<svg class="a" style="left:3426px;top:1279px" width="26" height="26" viewBox="0 0 26 26"><circle cx="10" cy="10" r="8" stroke="#8c9196" stroke-width="2" fill="none"/><path d="M16 16 L23 23" stroke="#8c9196" stroke-width="3"/></svg>
<svg class="a" style="left:3500px;top:1279px" width="30" height="28" viewBox="0 0 30 28"><path fill="#bdbdbd" fill-rule="evenodd" d="M8.08 4.35 L9.41 3.80 L9.49 0.27 L14.51 0.27 L14.59 3.80 L16.67 4.78 L17.81 5.66 L20.91 3.96 L23.42 8.31 L20.40 10.14 L20.59 12.43 L20.40 13.86 L23.42 15.69 L20.91 20.04 L17.81 18.34 L15.92 19.65 L14.59 20.20 L14.51 23.73 L9.49 23.73 L9.41 20.20 L7.33 19.22 L6.19 18.34 L3.09 20.04 L0.58 15.69 L3.60 13.86 L3.41 11.57 L3.60 10.14 L0.58 8.31 L3.09 3.96 L6.19 5.66 Z M8.10 12.00 a3.90 3.90 0 1 0 7.80 0 a3.90 3.90 0 1 0 -7.80 0 Z"/><path d="M17 21 H29 L23 27 Z" fill="#e0e0e0"/></svg>
<div class="a ui" style="left:3422px;top:1326px;line-height:44px;font-size:24px;color:#bfc4cd">..</div>
<div class="a" style="left:3434px;top:1325px;width:2px;height:44px;background:#30343c"></div>
<div class="a ui" style="left:3452px;top:1326px;line-height:44px;font-size:24px;color:#c9cdd6">Count</div>
<div class="a" style="left:3406px;top:1370px;width:137px;height:2px;background:#30343c"></div>
<div class="a" style="left:3411px;top:1562px;width:131px;height:40px;overflow:hidden"><div class="ui" style="line-height:38px;font-size:27.5px;color:#6b717d;transform-origin:0 0;transform:scaleX(0.985)">loaded. <span style="color:#5a8ff0">Lo</span></div></div>

<!-- watermark -->
<div class="a wm" id="wm" style="left:2598px;top:1676px">initsec blog.gm7.org</div>
<pre class="a art" style="left:44px;top:1580px">     __ ____        ___ __
 ___/ // / / __ _  &lt;  // /_ ___
/ _  //_  _//  ' \ / //__/(_-&lt;
\_,_/  /_/ /_/_/_//_/ \__//___/</pre>

</body></html>
